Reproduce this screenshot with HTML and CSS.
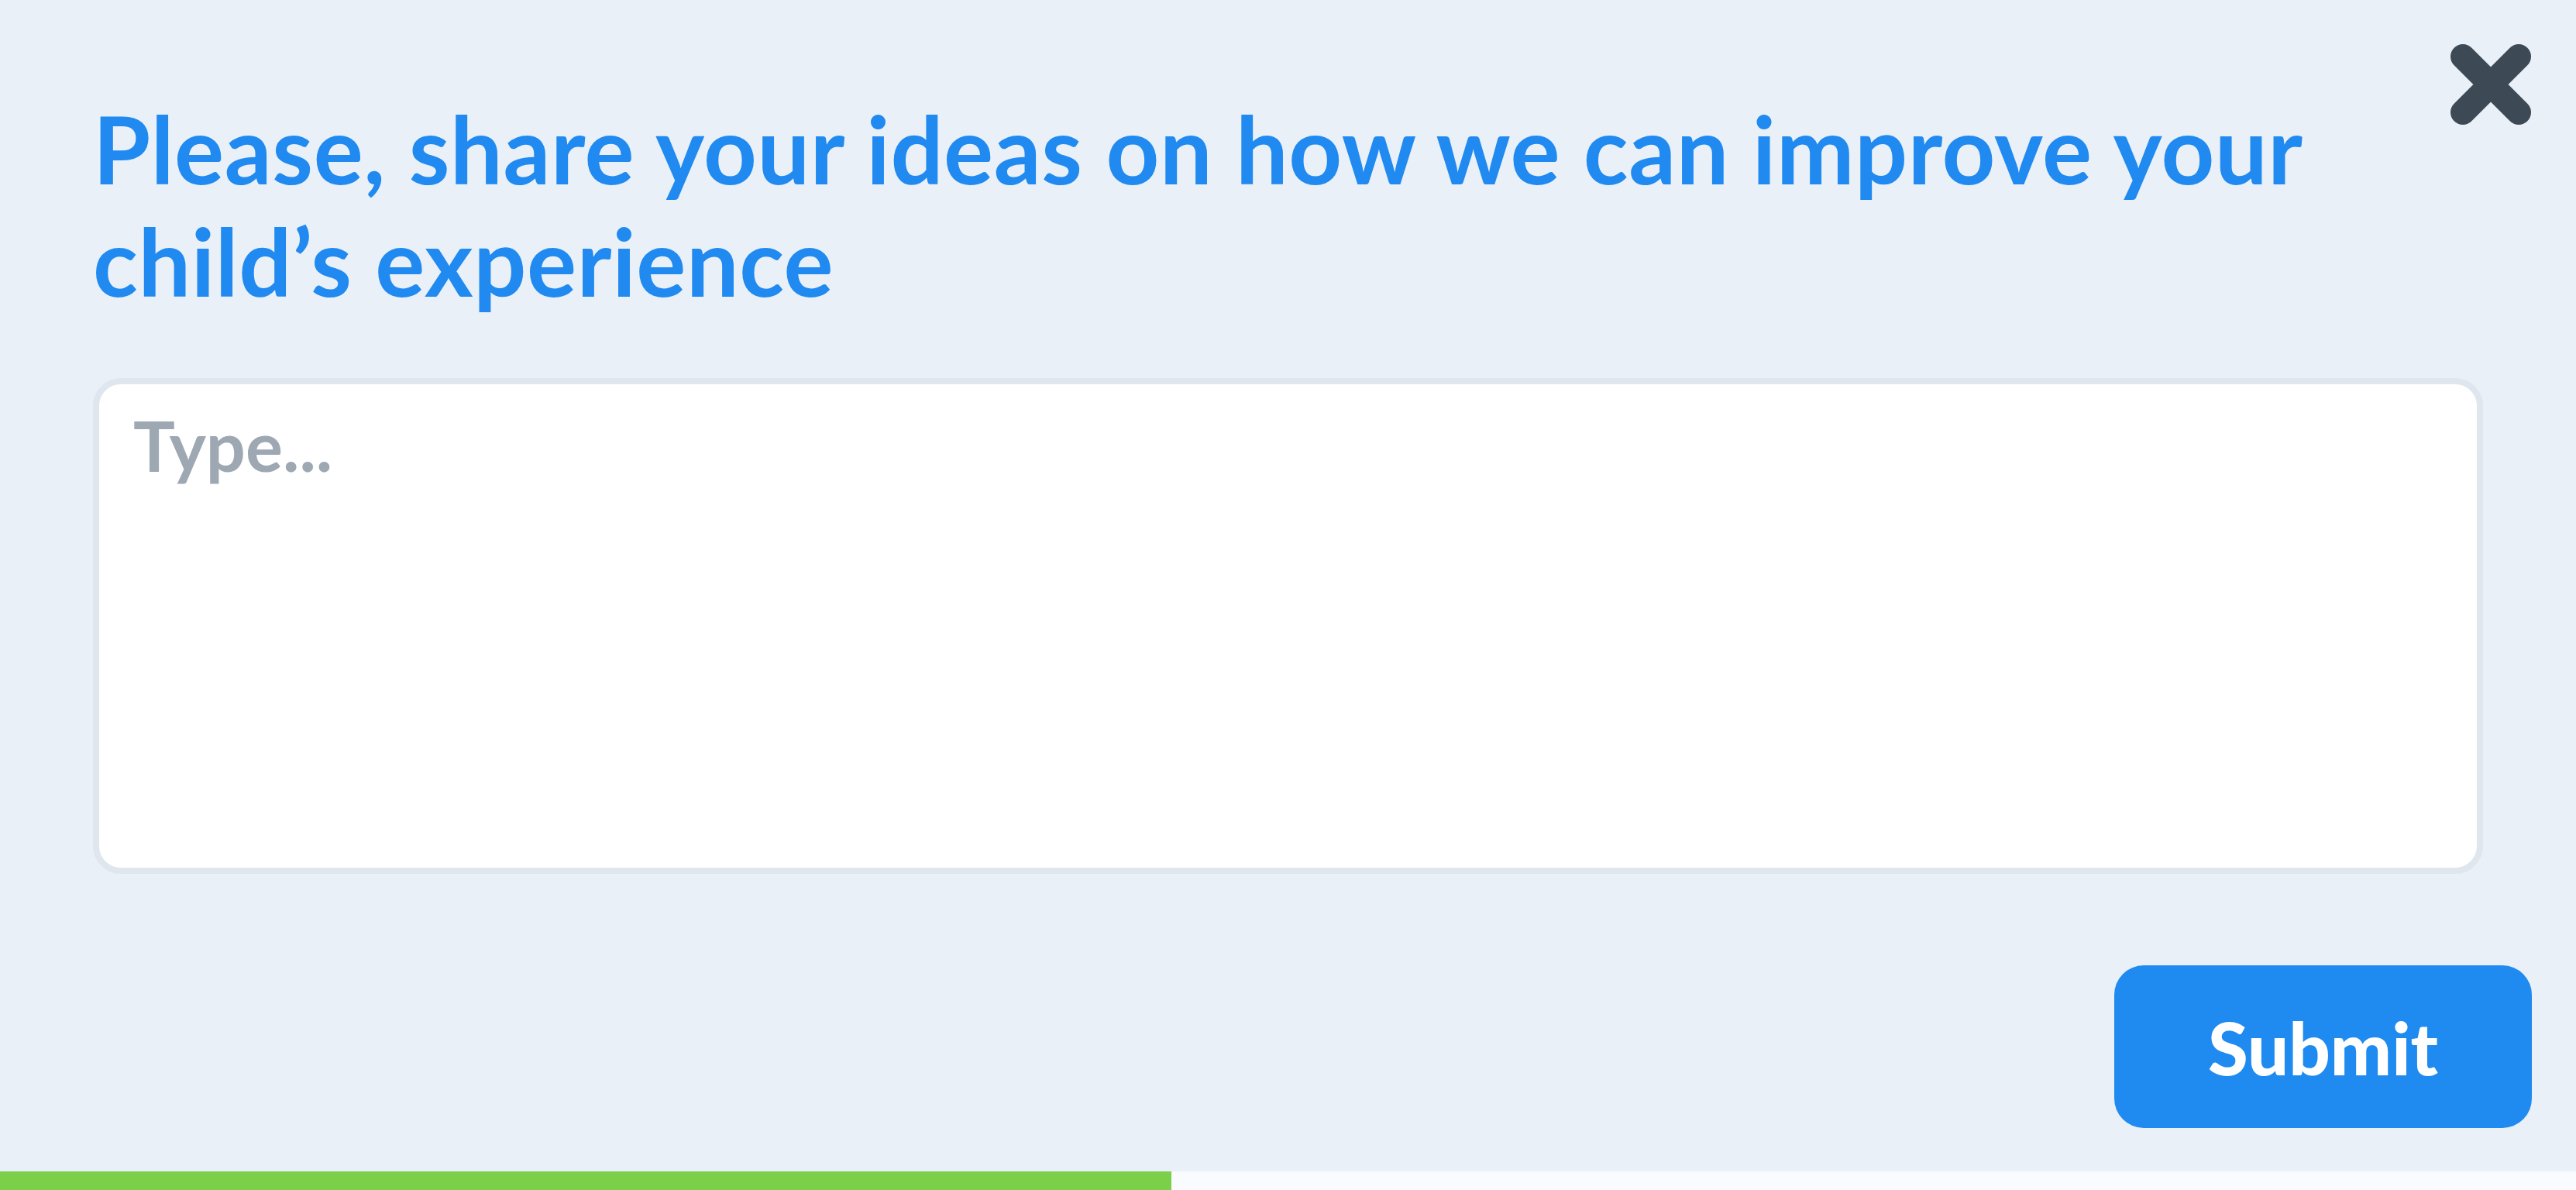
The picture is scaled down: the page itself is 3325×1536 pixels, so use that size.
FILE: index.html
```html
<!DOCTYPE html>
<html lang="en">
<head>
<meta charset="utf-8">
<title>Feedback</title>
<link rel="stylesheet" href="styles.css">
</head>
<body>
<div class="page">
  <button class="close" aria-label="Close">
    <svg viewBox="0 0 106 106" width="106" height="106" aria-hidden="true">
      <path d="M17 17 L89 89 M89 17 L17 89" stroke="#3d4a56" stroke-width="32" stroke-linecap="round" fill="none"/>
    </svg>
  </button>
  <main class="content">
    <h1 class="title">Please, share your ideas on how we can improve your child’s experience</h1>
    <textarea class="field" placeholder="Type..."></textarea>
    <div class="actions">
      <button class="submit">Submit</button>
    </div>
  </main>
  <div class="progress">
    <div class="progress-fill" style="width:45.47%"></div>
  </div>
</div>
</body>
</html>
```

FILE: styles.css
```css
html, body {
  margin: 0;
  padding: 0;
}
body {
  background: #e9f0f8;
  font-family: "Lato", "Noto Sans", sans-serif;
}
.page {
  position: relative;
  width: 3325px;
  height: 1536px;
  display: flex;
  flex-direction: column;
  overflow: hidden;
}
.close {
  position: absolute;
  top: 56px;
  right: 57px;
  width: 106px;
  height: 106px;
  padding: 0;
  border: 0;
  background: transparent;
  display: flex;
}
.content {
  flex: 1;
  display: flex;
  flex-direction: column;
  padding: 120px 57px 0 120px;
}
.title {
  margin: 0 63px 0 0;
  font-size: 120px;
  line-height: 145px;
  font-weight: 700;
  color: #208af0;
  max-width: 2960px;
  letter-spacing: 0.6px;
}
.field {
  margin: 78px 63px 0 0;
  box-sizing: border-box;
  height: 640px;
  border: 8px solid #dfe6ee;
  border-radius: 36px;
  background: #ffffff;
  padding: 24px 44px;
  font-family: "Lato", "Noto Sans", sans-serif;
  font-size: 90px;
  font-weight: 700;
  line-height: 108px;
  color: #3d4a56;
  resize: none;
  outline: none;
}
.field::placeholder {
  color: #9ea8b2;
  opacity: 1;
}
.actions {
  display: flex;
  justify-content: flex-end;
  margin-top: 118px;
}
.submit {
  width: 539px;
  height: 210px;
  border: 0;
  border-radius: 38px;
  background: #1f8af0;
  color: #ffffff;
  font-family: "Lato", "Noto Sans", sans-serif;
  font-size: 94px;
  font-weight: 900;
  padding: 0;
}
.progress {
  height: 24px;
  background: #f9fbfe;
  display: flex;
}
.progress-fill {
  height: 100%;
  background: #7ccf48;
}
```
